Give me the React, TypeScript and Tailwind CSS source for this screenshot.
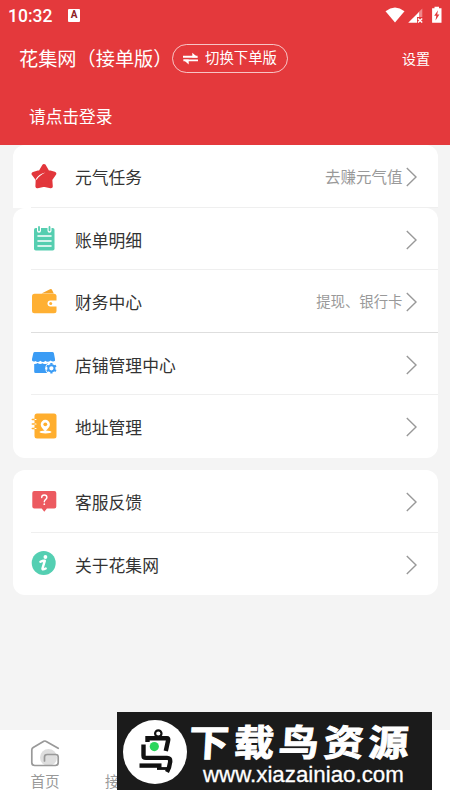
import React from 'react';
import clsx from 'clsx';

interface RowProps {
    icon: React.ReactNode;
    title: string;
    extra?: string;
    extraClass?: string;
    lineClass?: string;
    last?: boolean;
}

const StarIcon = () => (
    <svg width="26" height="28" viewBox="0 0 26 28">
        <path
            d="M13 4 16.2 9.6 23.3 11.6 19.3 17.4 19.8 24.3 13 22.8 6.4 24.3 6.7 17.4 2.6 11.8 9.8 9.6Z"
            fill="#e2363b"
            stroke="#e2363b"
            strokeWidth="4"
            strokeLinejoin="round"
        />
        <path d="M13 8 18 12 17 20 13 22 8 20 7 12Z" fill="#e2363b" />
        <path d="M4.6 17.6C6.5 14 9.8 11.8 14.4 10.6 10.4 12.6 7.6 14.6 5.7 17.8Z" fill="#fff" />
    </svg>
);

const BillIcon = () => (
    <svg width="26" height="28" viewBox="0 0 26 28">
        <rect x="3" y="4" width="20.5" height="22.5" rx="1.8" fill="#55ceb0" />
        <path d="M8 2.5v4.2M18.5 2.5v4.2" stroke="#fff" strokeWidth="4" strokeLinecap="round" />
        <path d="M8 3v3.3M18.5 3v3.3" stroke="#55ceb0" strokeWidth="1.8" strokeLinecap="round" />
        <path d="M7 12h13M7 17h13M7 22h13" stroke="#fff" strokeWidth="1.6" strokeLinecap="round" />
    </svg>
);

const WalletIcon = () => (
    <svg width="26" height="28" viewBox="0 0 26 28">
        <path d="M10.5 6.5 19 2.2q1.5-.7 2.1.7l1.7 3.6Z" fill="#f5a52a" />
        <rect x="1" y="6.8" width="24.5" height="19.5" rx="2.5" fill="#ffb033" />
        <path d="M26 13.4h-6.5a3 3 0 0 0 0 6H26Z" fill="#fff" />
        <circle cx="19.7" cy="16.4" r="1.5" fill="#ffb033" />
    </svg>
);

const ShopIcon = () => (
    <svg width="26" height="28" viewBox="0 0 26 28">
        <path d="M3.8 3h17.5q1.3 0 1.6 1.2L24 10v1.8q-2 1.5-4.4-.3-3 2.6-5.3.2-2 2.4-5 0-2.5 2.4-4.8.2Q2.5 13.4 1 11.6V10l1.3-5.8Q2.6 3 3.8 3Z" fill="#3b9cf5" />
        <path d="M3.2 15q2 .2 3.4-1 2.5 1.8 5 .2 2.6 1.8 5 0 3 1.6 5.8.5v9.3H4.5q-1.3 0-1.3-1.3Z" fill="#3b9cf5" />
        <circle cx="20.4" cy="19.3" r="6.2" fill="#fff" />
        <circle cx="20.4" cy="19.3" r="3.1" fill="none" stroke="#3b9cf5" strokeWidth="1.9" />
        <path
            d="M20.4 14v1.8M20.4 22.8v1.8M15.8 16.6l1.6.9M23.4 21.1l1.6.9M15.8 22l1.6-.9M23.4 17.5l1.6-.9"
            stroke="#3b9cf5"
            strokeWidth="2.2"
        />
    </svg>
);

const AddressIcon = () => (
    <svg width="26" height="28" viewBox="0 0 26 28">
        <rect x="3.5" y="1.5" width="22" height="25" rx="2.5" fill="#ffae2e" />
        <path d="M4 7.5H1.3M4 12H1.3M4 16.5H1.3" stroke="#ffae2e" strokeWidth="1.5" strokeLinecap="round" />
        <path d="M4 7.5H5M4 12H5M4 16.5H5" stroke="#fff" strokeWidth="1.1" strokeLinecap="round" />
        <path d="M14.2 19.5C11.5 16.6 9.7 14.7 9.7 12.4a4.6 4.6 0 0 1 9.2 0c0 2.3-1.9 4.2-4.7 7.1Z" fill="#fff" />
        <circle cx="14.3" cy="12.3" r="1.9" fill="#ffae2e" />
        <ellipse cx="14.5" cy="20" rx="6" ry="1.5" fill="#fff" />
    </svg>
);

const FeedbackIcon = () => (
    <svg width="26" height="28" viewBox="0 0 26 28">
        <path d="M3.3 4h20q2 0 2 2v13.6q0 2-2 2h-7.4l-2.6 3.2-2.6-3.2H3.3q-2 0-2-2V6q0-2 2-2Z" fill="#ec5a60" />
        <path
            d="M10.7 10.5c0-1.5 1.1-2.5 2.6-2.5s2.6 1 2.6 2.4c0 2-2.6 2-2.6 4.3"
            fill="none"
            stroke="#fff"
            strokeWidth="1.4"
            strokeLinecap="round"
        />
        <circle cx="13.3" cy="17.2" r="0.9" fill="#fff" />
    </svg>
);

const InfoIcon = () => (
    <svg width="26" height="28" viewBox="0 0 26 28">
        <circle cx="12.7" cy="14" r="12" fill="#54cfb2" />
        <circle cx="14.4" cy="8" r="1.9" fill="#fff" />
        <path
            d="M9.4 12.8q2.6-1.3 4.4-1l-2.3 7.5q-.4 2 3.2.2"
            fill="none"
            stroke="#fff"
            strokeWidth="2.4"
            strokeLinecap="round"
            strokeLinejoin="round"
        />
    </svg>
);

const Row: React.FC<RowProps> = ({ icon, title, extra, extraClass, lineClass, last }) => (
    <div className="flex h-[62.5px] pl-[18px]">
        <div className="flex w-11 items-center pb-px">{icon}</div>
        <div
            className={clsx(
                'relative flex flex-1 items-center border-b pt-[3px] pr-[21px]',
                last ? 'border-transparent' : lineClass || 'border-[#efefef]'
            )}
        >
            {/* 分割线从图标下方开始 */}
            {!last && <span className={clsx('absolute -bottom-px -left-11 w-11 border-b', lineClass || 'border-[#efefef]')} />}
            <span className="flex-1 pt-[2.5px] pl-[0.5px] text-[16.8px] text-[#333]">{title}</span>
            {extra && <span className={clsx('pt-0.5 text-[#999]', extraClass)}>{extra}</span>}
            <svg className="ml-[3px]" width="11" height="20" viewBox="0 0 11 20" fill="none">
                <path d="M0.8 1 10 10 0.8 19" stroke="#999" strokeWidth="1.4" />
            </svg>
        </div>
    </div>
);

const StatusBar: React.FC = () => (
    <div className="flex h-8 items-center pl-2 pr-2 text-white">
        <span className="w-[60px] pt-px font-[Roboto] text-[17.5px] font-medium">10:32</span>
        <span className="mt-[-2px] flex h-[13px] w-3 items-center justify-center rounded-[1px] bg-white font-[Roboto] text-[10px] font-bold text-[#8e2023]">
            A
        </span>
        <span className="flex-1" />
        <svg className="mt-[-2px]" width="57" height="18" viewBox="0 0 57 18" fill="#fff">
            <path d="M0.5 5.2Q10 -2.2 19.5 5.2L10 16.5Z" />
            <path d="M23.2 16.8 34 6v10.8Z" />
            <path d="M33.5 6.3 37.3 2.5v9H33.5Z" fillOpacity=".4" />
            <path d="M32 11h6v6h-6Z" fill="#e4393c" />
            <path d="m33 12.4 4.2 4.2M37.2 12.4 33 16.6" stroke="#fff" strokeWidth="1.4" />
            <path d="M49.5 0.8h4.5v1.4h2.5v14.6h-9.4V2.2h2.4Z" />
            <path d="m53 4.2-3.8 5.6h2.1l-.8 4.8 3.9-6.1h-2.2Z" fill="#e4393c" />
        </svg>
    </div>
);

const App: React.FC = () => {
    return (
        <div className="relative flex h-[800px] w-[450px] flex-col overflow-hidden bg-[#f4f4f4] font-['Roboto','Noto_Sans_CJK_SC',sans-serif] leading-none">
            <header className="h-[145px] shrink-0 bg-[#e4393c] text-white">
                <StatusBar />
                <div className="flex h-[52px] items-center pl-[19px] pr-[20px]">
                    <h1 className="w-[153px] whitespace-nowrap pt-[3px] text-[19.2px]">花集网（接单版）</h1>
                    <button className="flex h-[29px] w-[116px] items-center rounded-full border border-white/70 pl-[10px] text-[14.4px] whitespace-nowrap">
                        <svg className="mr-[7px] shrink-0" width="15" height="13" viewBox="0 0 15 13">
                            <path d="M0 4.8h14.6M0.4 8.4H15" stroke="#fff" strokeWidth="1.9" />
                            <path d="M9.3 0.8 14.8 5.6H9.3ZM5.7 12.4 0.2 7.6h5.5Z" fill="#fff" />
                        </svg>
                        <span className="pt-[3px]">切换下单版</span>
                    </button>
                    <span className="ml-auto pt-px text-[14px]">设置</span>
                </div>
                <p className="pl-[29px] pt-[26px] text-[16.7px]">请点击登录</p>
            </header>

            <main className="flex flex-1 flex-col px-[12.5px]">
                <section className="rounded-t-xl bg-white">
                    <Row icon={<StarIcon />} title="元气任务" extra="去赚元气值" extraClass="text-[15.5px]" />
                </section>
                <section className="rounded-xl bg-white">
                    <Row icon={<BillIcon />} title="账单明细" />
                    <Row icon={<WalletIcon />} title="财务中心" extra="提现、银行卡" extraClass="text-[14.4px]" lineClass="border-[#dedede]" />
                    <Row icon={<ShopIcon />} title="店铺管理中心" />
                    <Row icon={<AddressIcon />} title="地址管理" last />
                </section>
                <section className="mt-[12.5px] rounded-xl bg-white">
                    <Row icon={<FeedbackIcon />} title="客服反馈" />
                    <Row icon={<InfoIcon />} title="关于花集网" last />
                </section>
            </main>

            <nav className="flex h-[70px] shrink-0 bg-white text-[14.6px] text-[#999]">
                <div className="flex w-[90px] flex-col items-center pt-[9px]">
                    <svg width="30" height="29" viewBox="0 0 30 29" fill="none">
                        <circle cx="18.5" cy="18.5" r="8.5" fill="#dedede" />
                        <path
                            d="M28.2 9.3 15.8 2.3q-1-.6-2 0L3.2 8.6Q1.8 9.4 1.8 11v12.5q0 3 3 3h20.4q3 0 3-3V18q0-2.5-2.5-2.5h-8.5q-2.7 0-2.7 2.5v4"
                            stroke="#999"
                            strokeWidth="1.7"
                            strokeLinecap="round"
                            strokeLinejoin="round"
                        />
                    </svg>
                    <span className="mt-[6.5px]">首页</span>
                </div>
                <div className="w-[90px] pl-[15px] pt-[44.5px]">
                    <span className="whitespace-nowrap">接单</span>
                </div>
            </nav>

            {/* 底部水印 */}
            <div className="absolute left-[117px] top-[712px] flex h-[78px] w-[315px] items-center bg-[#1b1b1b] pl-[5px] text-white">
                <svg className="shrink-0" width="66" height="66" viewBox="0 0 66 66" fill="none">
                    <circle cx="33" cy="34" r="32" fill="#fff" />
                    <g stroke="#111" strokeWidth="4.4">
                        <circle cx="36.3" cy="15.5" r="3.2" strokeWidth="2.2" />
                        <path d="M25.5 24v-3.8H45q1.6 0 1.2 1.8L43.8 33" />
                        <path d="M21.5 26.5v11q0 2.4 2.5 2.4h21q3.5 0 3.2 3.6-.5 5.5-3.2 10.5" />
                        <path d="M35 50.5h10" strokeWidth="2.8" />
                        <path d="M17.5 47.6h22" />
                    </g>
                    <circle cx="32.3" cy="28.6" r="4.6" fill="#2bd65c" />
                </svg>
                <div className="ml-[-2px] flex flex-col pt-[9px]">
                    <span className="ml-[3px] h-[38px] origin-left -skew-x-3 scale-x-[1.1] whitespace-nowrap pt-px text-[36.5px] font-bold tracking-[4.3px] [-webkit-text-stroke:1px_white]">
                        下载鸟资源
                    </span>
                    <span className="ml-[17px] mt-px font-['Liberation_Sans'] text-[22.3px] [-webkit-text-stroke:0.3px_white]">
                        www.xiazainiao.com
                    </span>
                </div>
            </div>
        </div>
    );
};

export default App;
